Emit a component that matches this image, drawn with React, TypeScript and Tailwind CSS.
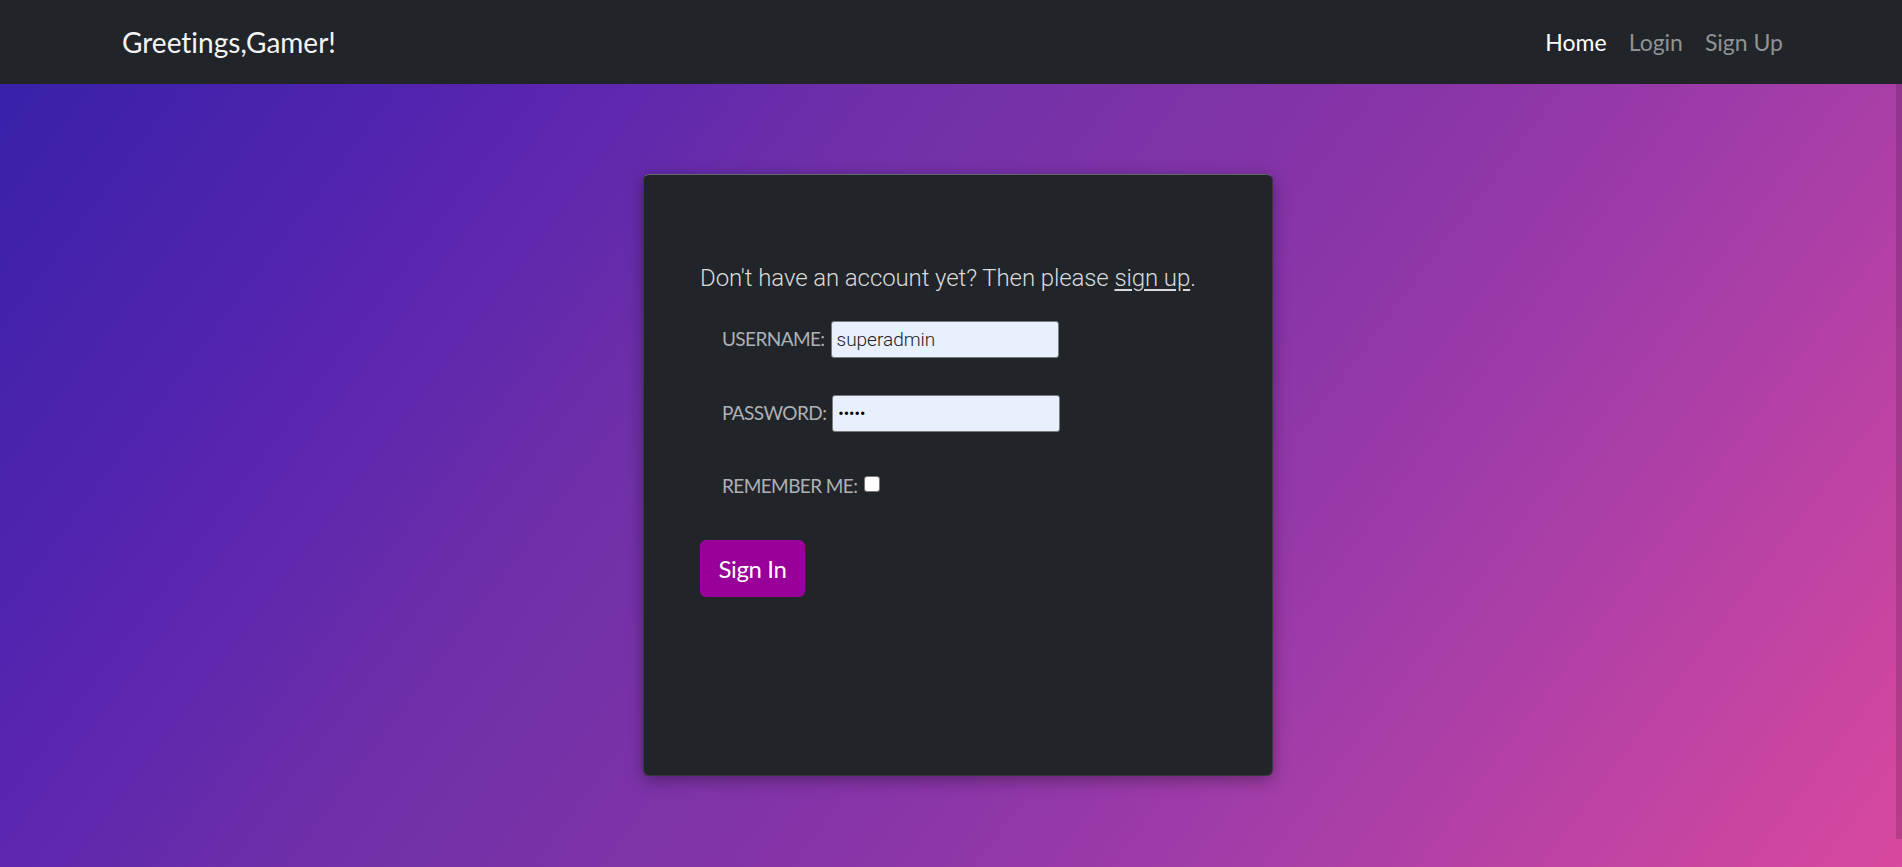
import React from "react";

export default function App() {
  const lato = { fontFamily: "Lato, 'Noto Sans', sans-serif", fontVariantLigatures: "none" as const };
  const roboto = { fontFamily: "Roboto, 'Noto Sans', sans-serif" };
  return (
    <div className="relative h-[867px] w-full overflow-hidden bg-[linear-gradient(127deg,#3520a8_0%,#5a25b0_24%,#7030a8_38%,#8a35a8_60%,#a83ea8_76%,#d8489e_100%)]">
      <nav className="flex h-[84px] items-center justify-between bg-[#212529] pl-[122px] pr-[119px]">
        <span className="text-[28px] text-[#f4f4f4]" style={lato}>
          Greetings,Gamer!
        </span>
        <div className="flex items-center gap-[22px] text-[23px]" style={lato}>
          <span className="text-white">Home</span>
          <span className="text-[#8f9296]">Login</span>
          <span className="text-[#8f9296]">Sign Up</span>
        </div>
      </nav>

      <main className="flex justify-center pl-[14px] pt-[90px]">
        <div className="h-[602px] w-[630px] rounded-[6px] border border-white/10 border-t-white/30 bg-[#212529] pl-[56px] pt-[86px] shadow-[0_4px_16px_rgba(0,0,0,0.35)]">
          <p
            className="text-[24px] font-light leading-[34px] tracking-[-0.1px] text-[#d9dadb]"
            style={roboto}
          >
            Don't have an account yet? Then please{" "}
            <span className="underline underline-offset-[3px]">sign up</span>.
          </p>

          <div className="ml-[22px] mt-[26px] flex h-[37px] items-center">
            <span className="text-[19px] tracking-[-0.6px] text-[#adb1b5]" style={lato}>
              USERNAME:
            </span>
            <input
              type="text"
              defaultValue="superadmin"
              readOnly
              className="ml-[6px] h-[37px] w-[228px] rounded-[3px] border border-[#7a7a7a] bg-[#e8f0fe] px-[5px] text-[19px] font-light text-[#222] outline-none"
              style={roboto}
            />
          </div>

          <div className="ml-[22px] mt-[37px] flex h-[37px] items-center">
            <span className="text-[19px] tracking-[-0.6px] text-[#adb1b5]" style={lato}>
              PASSWORD:
            </span>
            <input
              type="password"
              defaultValue="admin"
              readOnly
              className="ml-[6px] h-[37px] w-[228px] rounded-[3px] border border-[#7a7a7a] bg-[#e8f0fe] px-[5px] text-[16px] text-black outline-none"
              style={roboto}
            />
          </div>

          <div className="ml-[22px] mt-[36px] flex h-[37px] items-center">
            <span className="text-[19px] tracking-[-0.6px] text-[#adb1b5]" style={lato}>
              REMEMBER ME:
            </span>
            <span className="ml-[7px] -mt-[5px] inline-block h-[16px] w-[16px] rounded-[3px] border border-[#767676] bg-white" />
          </div>

          <button
            className="mt-[35px] flex h-[57px] w-[105px] items-center justify-center rounded-[6px] bg-[#990099] text-[24px] tracking-[-0.4px] text-white"
            style={lato}
          >
            Sign In
          </button>
        </div>
      </main>

      <div className="absolute right-0 top-[84px] h-[755px] w-[6px] bg-black/15" />
    </div>
  );
}
